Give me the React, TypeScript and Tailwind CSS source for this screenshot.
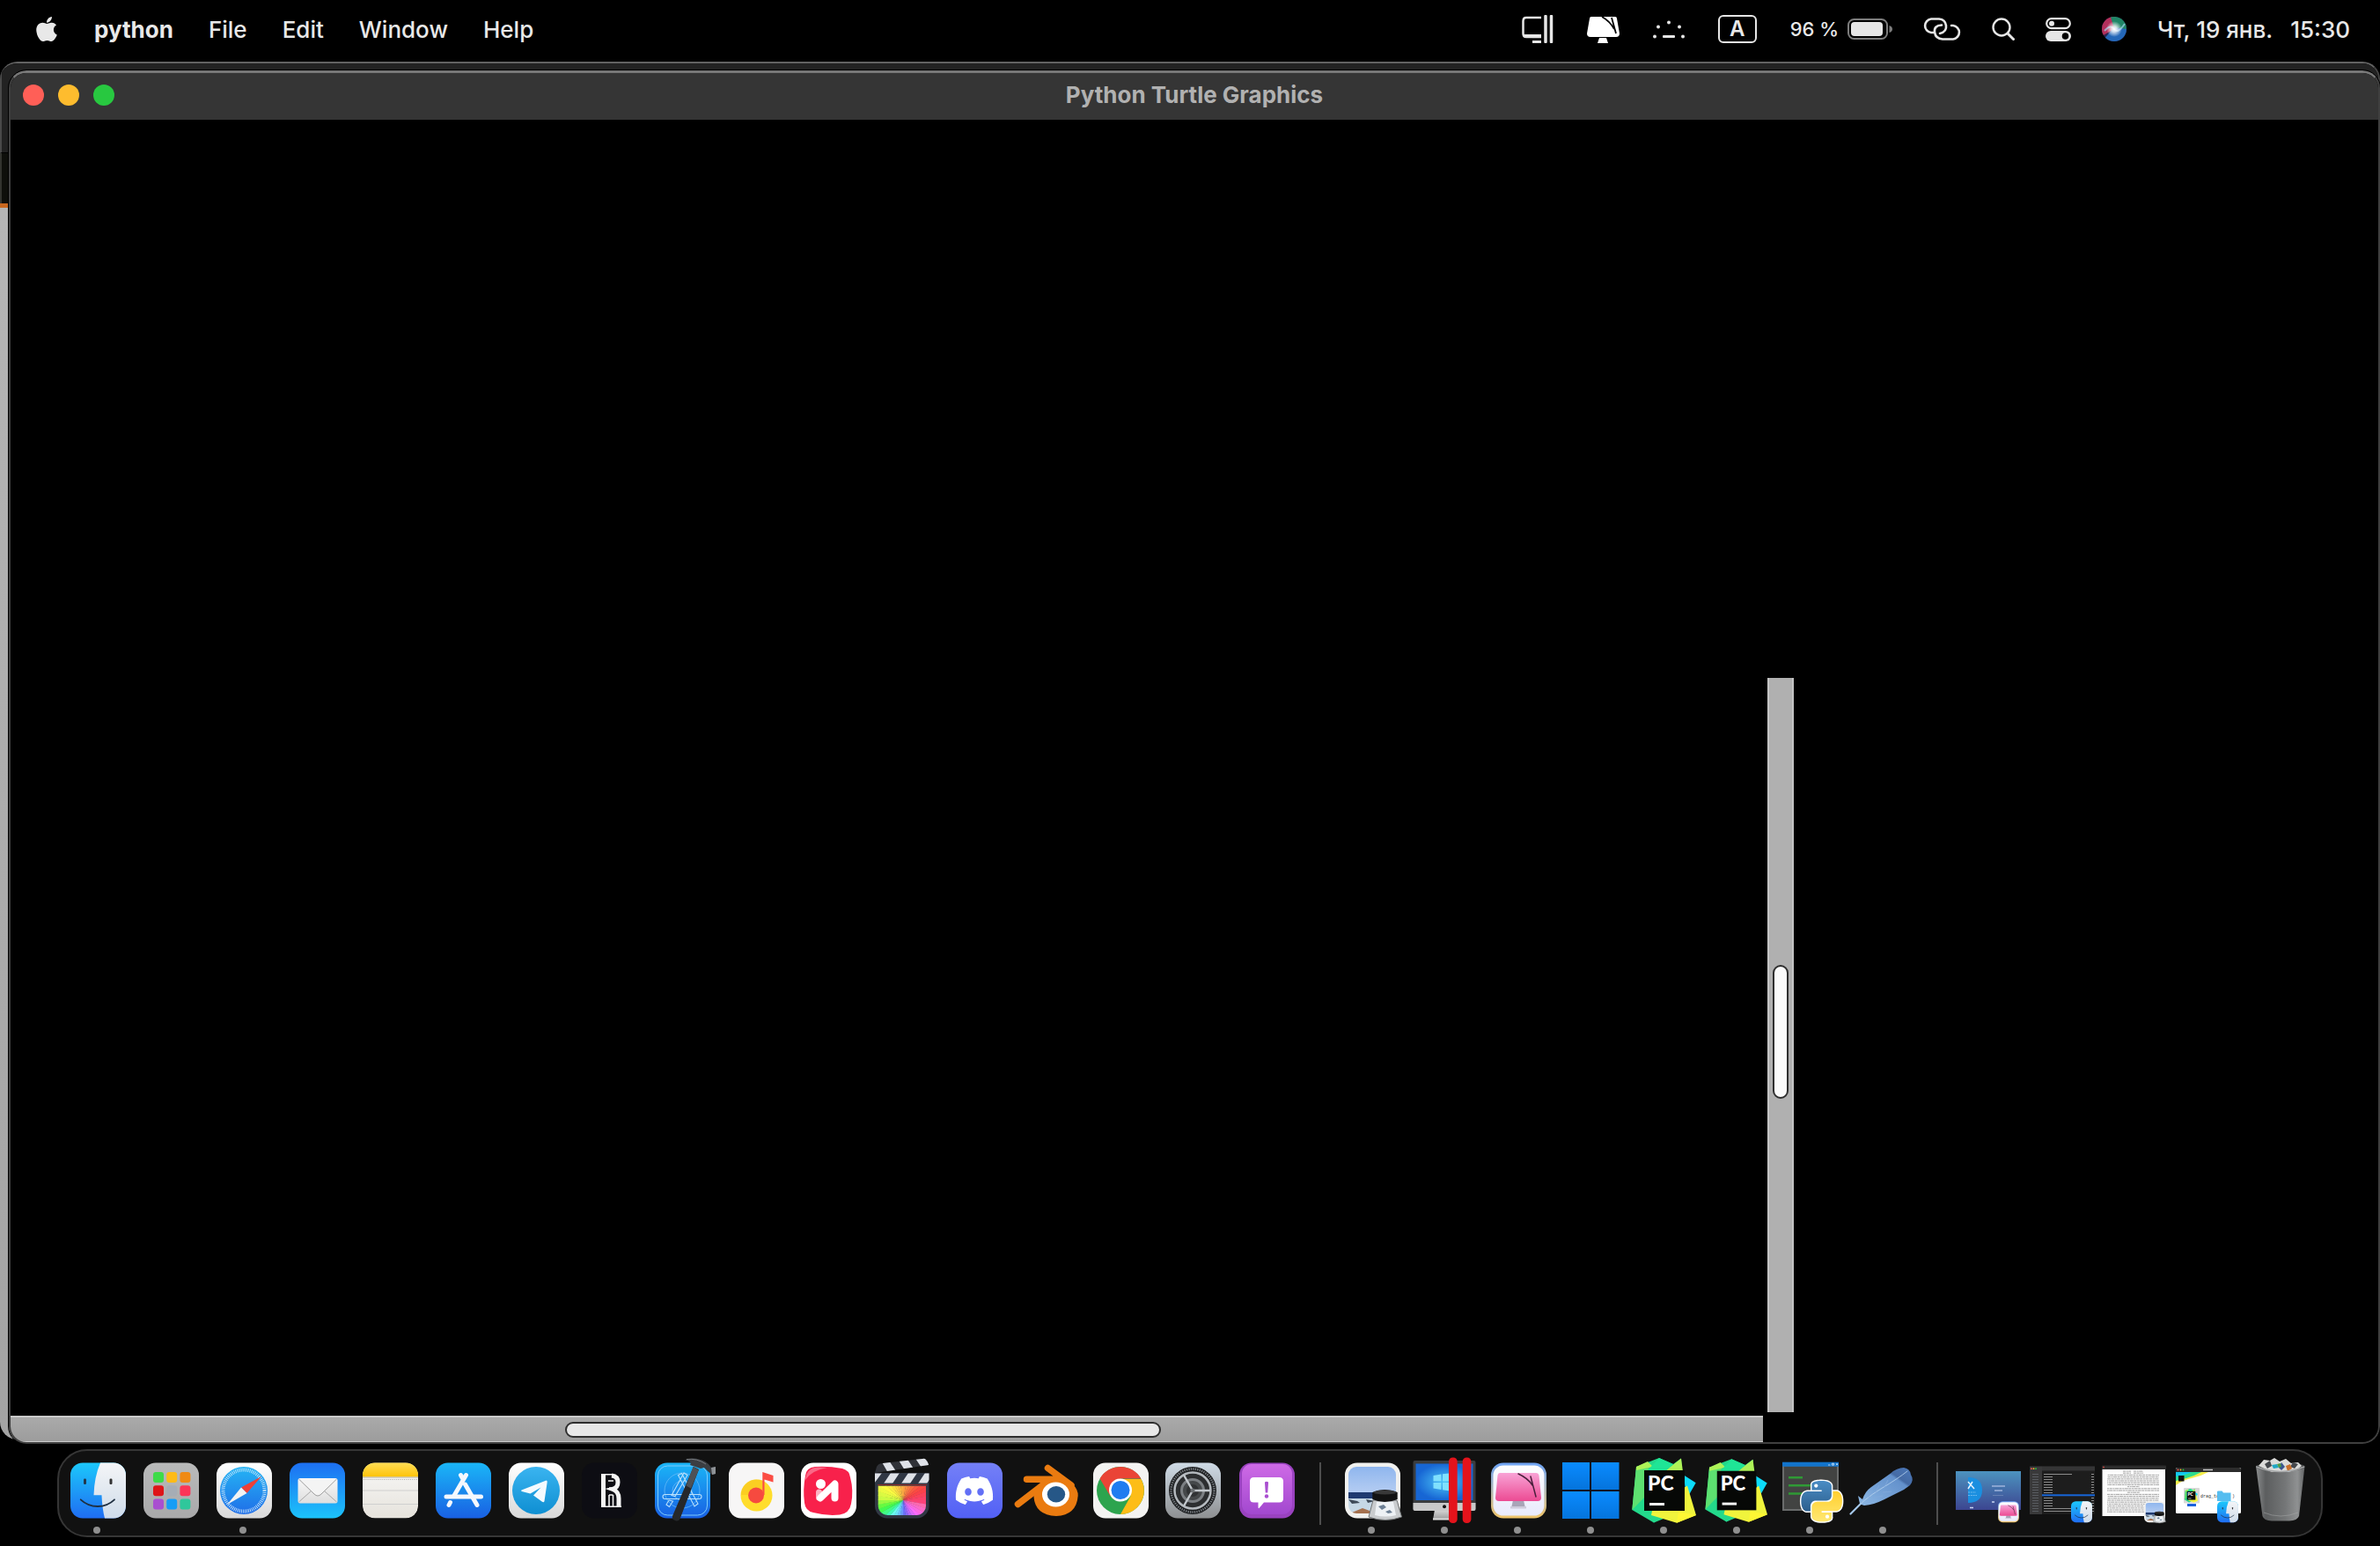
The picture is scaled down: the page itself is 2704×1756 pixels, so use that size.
import type { ReactNode } from 'react'
import { FaApple, FaDiscord } from 'react-icons/fa'

interface DockItem {
  name: string
  running?: boolean
  art: ReactNode
}

const MENUS = ['File', 'Edit', 'Window', 'Help']

const PYTHON_PATH =
  'M14.25.18l.9.2.73.26.59.3.45.32.34.34.25.34.16.33.1.3.04.26.02.2-.01.13V8.5l-.05.63-.13.55-.21.46-.26.38-.3.31-.33.25-.35.19-.35.14-.33.1-.3.07-.26.04-.21.02H8.77l-.69.05-.59.14-.5.22-.41.27-.33.32-.27.35-.2.36-.15.37-.1.35-.07.32-.04.27-.02.21v3.06H3.17l-.21-.03-.28-.07-.32-.12-.35-.18-.36-.26-.36-.36-.35-.46-.32-.59-.28-.73-.21-.88-.14-1.05-.05-1.23.06-1.22.16-1.04.24-.87.32-.71.36-.57.4-.44.42-.33.42-.24.4-.16.36-.1.32-.05.24-.01h.16l.06.01h8.16v-.83H6.18l-.01-2.75-.02-.37.05-.34.11-.31.17-.28.25-.26.31-.23.38-.2.44-.18.51-.15.58-.12.64-.1.71-.06.77-.04.84-.02 1.27.05z'

// id, top colour, bottom colour
const GRADIENTS: [string, string, string][] = [
  ['finderBlue', '#1cc8fb', '#1f6df2'],
  ['finderWhite', '#f4f5f7', '#cfdcea'],
  ['white', '#ffffff', '#d9d9d9'],
  ['safari', '#25b4f4', '#1f6ee8'],
  ['mail', '#1d6ff2', '#1cc3fb'],
  ['envelope', '#f8f8f8', '#dedede'],
  ['notesTop', '#ffde57', '#fec309'],
  ['notes', '#f8f8f7', '#e6e3dc'],
  ['store', '#1ab6f7', '#1960e3'],
  ['telegram', '#3ab4f0', '#0f8fd2'],
  ['discord', '#7480f7', '#5260f5'],
  ['settings', '#cfdbe6', '#8e9092'],
  ['feedback', '#ce6ae6', '#a248cf'],
  ['sky', '#8fb6ee', '#b5cdf2'],
  ['cmmRing', '#6fa5f7', '#f0c468'],
  ['cmm', '#fdfdff', '#e9eafc'],
  ['pink', '#f8a3d6', '#ec4b93'],
  ['win', '#0a8bff', '#0574dc'],
  ['metal', '#d6d6d6', '#9b9b9b'],
  ['yellow', '#ffe873', '#ffcf2e'],
  ['pyBlue', '#4a8cc4', '#2c5f8e'],
  ['launch', '#b9baba', '#a9a9aa'],
  ['wall', '#4c93bf', '#3c4590'],
]

// [angle clockwise from the top, hue]
const WHEEL: [number, number][] = [
  [0, 390],
  [45, 365],
  [90, 342],
  [135, 295],
  [180, 220],
  [210, 175],
  [240, 125],
  [270, 75],
  [310, 55],
  [360, 30],
]

function wheelHue(deg: number) {
  const i = Math.max(1, WHEEL.findIndex(([angle]) => angle >= deg))
  const [a0, h0] = WHEEL[i - 1]
  const [a1, h1] = WHEEL[i]
  return h0 + ((deg - a0) / (a1 - a0)) * (h1 - h0)
}

function Defs() {
  return (
    <svg className="absolute size-0" aria-hidden="true">
      <defs>
        {GRADIENTS.map(([id, from, to]) => (
          <linearGradient key={id} id={id} x1="0" y1="0" x2="0" y2="1">
            <stop offset="0" stopColor={from} />
            <stop offset="1" stopColor={to} />
          </linearGradient>
        ))}
        <linearGradient id="trash" x1="0" y1="0" x2="1" y2="0">
          <stop offset="0" stopColor="#8b8d8e" />
          <stop offset="0.2" stopColor="#5c5e5f" />
          <stop offset="0.6" stopColor="#747677" />
          <stop offset="0.85" stopColor="#8f9192" />
          <stop offset="1" stopColor="#636566" />
        </linearGradient>
        <linearGradient id="feather" x1="0" y1="1" x2="1" y2="0">
          <stop offset="0" stopColor="#8db8e4" />
          <stop offset="0.7" stopColor="#6391cc" />
          <stop offset="0.74" stopColor="#456ba5" />
          <stop offset="1" stopColor="#4c79ba" />
        </linearGradient>
        <radialGradient id="desk">
          <stop offset="0" stopColor="#4cc4f7" />
          <stop offset="1" stopColor="#1766d4" />
        </radialGradient>
        <radialGradient id="siriGlow">
          <stop offset="0" stopColor="#ffffff" />
          <stop offset="0.35" stopColor="#ffffff" stopOpacity="0.8" />
          <stop offset="1" stopColor="#ffffff" stopOpacity="0" />
        </radialGradient>
        <clipPath id="tile">
          <rect width="63" height="63" y="0.5" rx="14" />
        </clipPath>
        <clipPath id="fcpBody">
          <path d="M4.700 26.700H59V49a11 11 0 0 1-11 11H16A11 11 0 0 1 4.700 49Z" />
        </clipPath>
        <clipPath id="clapTop">
          <path d="M1 12 3 5Q5 1 10 1L55-4q4-1 6 3l1 4Z" />
        </clipPath>
        <clipPath id="clapBottom">
          <rect x="1" y="12.500" width="61.500" height="11" />
        </clipPath>
        <clipPath id="photo">
          <rect x="4" y="5" width="54" height="53" rx="9" />
        </clipPath>
        <clipPath id="siriDisc">
          <circle cx="14" cy="14" r="14" />
        </clipPath>
      </defs>
    </svg>
  )
}

function Tile({ fill }: { fill: string }) {
  return <rect y="0.5" width="63" height="63" rx="14" fill={fill} />
}

function Finder() {
  return (
    <g>
      <Tile fill="url(#finderBlue)" />
      <path
        d="M34 .5Q27 17 26.500 37.300H35.500Q36 52 39 63.500H49A14 14 0 0 0 63 49.500V14.500A14 14 0 0 0 49 .5Z"
        fill="url(#finderWhite)"
      />
      <rect x="15" y="18.500" width="3" height="6.500" rx="1.200" fill="#22384e" />
      <rect x="44.500" y="18.500" width="3" height="6.500" rx="1.200" fill="#333" />
      <path d="M11.700 42.300Q20 50 31 50T50 42.300" fill="none" stroke="#1f2f40" strokeWidth="1.800" strokeLinecap="round" />
    </g>
  )
}

function Launchpad() {
  const colors = ['#3ddb48', '#fdbb17', '#f08a14', '#de1518', '#a6adb5', '#fb3557', '#a94fd0', '#179df5', '#2fc79b']
  return (
    <g>
      <Tile fill="url(#launch)" />
      {colors.map((color, i) => (
        <rect key={color} x={11 + (i % 3) * 15.2} y={11 + Math.floor(i / 3) * 15.2} width="12" height="12" rx="3" fill={color} />
      ))}
    </g>
  )
}

function Safari() {
  return (
    <g>
      <Tile fill="url(#white)" />
      <circle cx="31" cy="32" r="27" fill="url(#safari)" />
      <circle cx="31" cy="32" r="23.500" fill="none" stroke="#d5ecfb" strokeWidth="4" strokeDasharray="0.8 1.250" />
      <path d="M51 16 28 28.500 34.500 35Z" fill="#ee4037" />
      <path d="M12 48 28 28.500 34.500 35Z" fill="#f3f3f3" />
    </g>
  )
}

function Mail() {
  return (
    <g>
      <Tile fill="url(#mail)" />
      <rect x="9.500" y="18" width="45" height="28.500" rx="2.500" fill="url(#envelope)" />
      <path d="M10.500 45 24 33M53.500 45 40 33" stroke="#a9a9a9" strokeWidth="1" />
      <path d="M10.500 19 28 36Q32 40 36 36L53.500 19" fill="#f4f4f4" stroke="#9e9e9e" strokeWidth="1" />
    </g>
  )
}

function Notes() {
  return (
    <g clipPath="url(#tile)">
      <Tile fill="url(#notes)" />
      <rect width="63" height="16.500" fill="url(#notesTop)" />
      <path d="M0 17H63" stroke="#b9b3a0" strokeWidth="1" />
      <path d="M1 19.500H63" stroke="#aaa" strokeWidth="1" strokeDasharray="1 1.300" />
      <path d="M0 32H63M0 47.500H63" stroke="#cfcfcf" strokeWidth="1" />
    </g>
  )
}

function AppStore() {
  return (
    <g>
      <Tile fill="url(#store)" />
      <g stroke="#f5f8fd" strokeWidth="5" strokeLinecap="round">
        <path d="M28.500 14.500 31 19M34.500 14.500 20.500 38.500M33.500 25 47 48.500M16.500 45.500 15 48.500" />
        <path d="M12 39H51.500" />
      </g>
    </g>
  )
}

function Telegram() {
  return (
    <g>
      <Tile fill="url(#white)" />
      <circle cx="31" cy="32" r="27" fill="url(#telegram)" />
      <path
        d="M14.500 31.500 42 20.700Q44 20.200 43.700 22.500L40.500 44Q40 46 38 44.800L28 37.500 36.500 28.500 24.500 35.500 14.800 33Q13.500 32.200 14.500 31.500Z"
        fill="#f4fafe"
      />
    </g>
  )
}

function Bank() {
  return (
    <g>
      <Tile fill="#0d0d13" />
      <g fill="none" stroke="#f4f4f4">
        <path d="M24.500 13V51" strokeWidth="5" />
        <path d="M22 13.700H36M22 50.300H45M30 21H36" strokeWidth="1.600" />
        <path d="M34 15Q41 16 41 22.500T35 30.500Q42 33 42 41V50" strokeWidth="5" />
        <path d="M31 29H38M31 50V37M35.500 50V37M31 37H35.500" strokeWidth="1.600" />
      </g>
    </g>
  )
}

function Xcode() {
  return (
    <g>
      <Tile fill="url(#store)" />
      <rect x="3.500" y="4" width="56" height="56" rx="11" fill="none" stroke="#7dcbfb" strokeWidth="1" />
      <g fill="none" stroke="#64b9f8" strokeWidth="0.800">
        <circle cx="31" cy="32" r="20" />
        <circle cx="31" cy="32" r="11" />
      </g>
      <g fill="none" stroke="#b9e0fc" strokeWidth="1.100">
        <rect x="9" y="36.500" width="44" height="5" rx="2.500" />
        <path d="m33 12 4 2.500-14 24-4-1ZM26.500 14.500l4-2L49 47l-4 3ZM13 48l3-5 4.500 1-4 6.500Z" />
      </g>
      <path d="m44 5 6 3-21 55q-2 5-6 3-4-1-3-5Z" fill="#26282b" />
      <path d="m43.500 5 6.500 3.500-9 21-5.500-3Z" fill="#4d5156" />
      <path d="M34-3Q46-7 57-1l4 3 3 4 5-1v8l-4 1-5-4-4-4-4 1-12-4Q43-1 34-3Z" fill="#3b3e42" />
      <path d="M36-3.500Q48-5 58 2" fill="none" stroke="#777b80" strokeWidth="1" />
      <path d="m64 6 5-1v8l-4 1Z" fill="#8e9296" />
    </g>
  )
}

function Music() {
  return (
    <g transform="translate(1 0)">
      <Tile fill="#f7f6f6" />
      <circle cx="31.500" cy="37.500" r="18" fill="#ffdd2c" />
      <path d="M14 35A18 18 0 0 1 38 20.500V37H14Z" fill="#f9c41d" opacity="0.600" />
      <circle cx="31" cy="37.500" r="9" fill="#f64a3f" />
      <path d="M38.300 11 50.500 15V22.500L40.500 19.500V37H38.300Z" fill="#fb4d44" />
    </g>
  )
}

function YandexStart() {
  return (
    <g>
      <Tile fill="#fff" />
      <path
        d="M16 5Q31 4 47 7 55 9 56 17 60 32 57 47 55 58 44 59.500 29 61 14 57 5 55 4 46 2 31 5 15 6 6 16 5Z"
        fill="#f8214b"
      />
      <path d="M5 20Q6 6 20 5.500L30 6Q12 9 5 20Z" fill="#fb88a0" opacity="0.700" />
      <path d="M20.500 34V40" stroke="#fcb2c2" strokeWidth="7" strokeLinecap="round" />
      <path d="M22 40.500 38.500 24.500V40.500" fill="none" stroke="#fff" strokeWidth="8" strokeLinecap="round" strokeLinejoin="round" />
      <circle cx="22.500" cy="24.500" r="5.500" fill="#fff" />
    </g>
  )
}

function FinalCut() {
  const wedges = Array.from({ length: 36 }, (_, i) => i * 10)
  const point = (deg: number) => {
    const rad = (deg * Math.PI) / 180
    return `${(33 + 50 * Math.sin(rad)).toFixed(2)} ${(43 - 50 * Math.cos(rad)).toFixed(2)}`
  }
  return (
    <g>
      <path d="M1 12H62.500V50a14 14 0 0 1-14 13.500H15A14 14 0 0 1 1 50Z" fill="#303744" />
      <path d="M1 12 3 5Q5 1 10 1L55-4q4-1 6 3l1 4Z" fill="#303238" />
      <g clipPath="url(#clapTop)" fill="#dfe2e8">
        <path d="m8-2 9 0 8 12-9 2ZM27-4l10-1 8 12-10 2ZM46-6l10-1 8 11-10 2Z" />
      </g>
      <g clipPath="url(#clapBottom)" fill="#dfe2e8">
        <path d="M1 12H9L0 24H-9ZM19 12h10l-8 12H11ZM39 12h10l-8 12H31ZM58 12h10l-8 12H50Z" />
      </g>
      <path d="M4 25.500H60" stroke="#8a2a2a" strokeWidth="1" />
      <g clipPath="url(#fcpBody)">
        {wedges.map((deg) => (
          <path
            key={deg}
            d={`M33 43L${point(deg)}L${point(deg + 11)}Z`}
            fill={`hsl(${wheelHue(deg) % 360} 95% ${deg > 90 && deg < 220 ? 70 : 62}%)`}
          />
        ))}
      </g>
    </g>
  )
}

function Discord() {
  return (
    <g>
      <Tile fill="url(#discord)" />
      <FaDiscord x={8} y={9} size={46} color="#fff" />
    </g>
  )
}

function Blender() {
  return (
    <g>
      <g fill="none" stroke="#ea7b10" strokeWidth="7.500" strokeLinecap="round" strokeLinejoin="round">
        <path d="M31.500 6.500 58 26M7.500 19.300H44M-2.500 47.500 34 19.500" />
      </g>
      <path d="M26 19H49L60 25Q66 31 65.700 38 64 60 41 61 17 60 15.500 39L16 33Z" fill="#ea7b10" />
      <ellipse cx="40.500" cy="36.500" rx="15.500" ry="14" fill="#fff" />
      <ellipse cx="41" cy="36.200" rx="10.200" ry="9.200" fill="#265787" />
    </g>
  )
}

function Chrome() {
  return (
    <g>
      <Tile fill="#f3f3f2" />
      <circle cx="31" cy="32" r="27" fill="#2da44e" />
      <path d="M31 19H54.500A27 27 0 0 1 31 59L42.500 38.500Z" fill="#fdbd17" />
      <path d="M7.600 18.500A27 27 0 0 1 54.400 18.500H31L19.500 38.500Z" fill="#ea4436" />
      <circle cx="31" cy="31.500" r="13" fill="#fff" />
      <circle cx="31" cy="31.500" r="10.500" fill="#1f7cf0" />
    </g>
  )
}

function Settings() {
  return (
    <g transform="translate(-1 0)">
      <Tile fill="url(#settings)" />
      <circle cx="31" cy="32" r="27" fill="#1c1e20" />
      <circle cx="31" cy="32" r="24.500" fill="none" stroke="#7a7f84" strokeWidth="2.500" strokeDasharray="1.300 1.200" />
      <circle cx="31" cy="32" r="20.500" fill="#2c2e30" stroke="#b4b9be" strokeWidth="2.500" />
      <circle cx="31" cy="32" r="12.500" fill="#45484a" stroke="#7b7f83" strokeWidth="3" />
      <circle cx="31" cy="32" r="7" fill="#303234" />
      <path d="M31 32H51M31 32 21 14.500M31 32 21 49.500" stroke="#c1c6cb" strokeWidth="2.500" />
      <circle cx="31" cy="32" r="2.500" fill="#6d7174" />
    </g>
  )
}

function Feedback() {
  return (
    <g>
      <Tile fill="#9a42c0" />
      <rect x="3" y="2" width="57" height="57" rx="11" fill="url(#feedback)" />
      <path d="M16.500 17H45.500Q50 17 50 21.500V41Q50 45.500 45.500 45.500H28L22.500 52Q21.500 52.500 21.500 51V45.500H16.500Q12 45.500 12 41V21.500Q12 17 16.500 17Z" fill="#fff" />
      <path d="M29 22.500Q31 21 33 22.500L32.300 34.500H29.700Z" fill="#a94fd0" />
      <circle cx="31" cy="38.500" r="2.200" fill="#a94fd0" />
    </g>
  )
}

function Preview() {
  return (
    <g>
      <Tile fill="#f1f1ef" />
      <g clipPath="url(#photo)">
        <rect x="4" y="5" width="54" height="30" fill="url(#sky)" />
        <rect x="4" y="34" width="54" height="8" fill="#1f3a70" />
        <rect x="4" y="41" width="54" height="18" fill="#c6d8e6" />
        <path d="M4 42 14 44 17 46 8 47ZM24 42l10 2-8 2Z" fill="#3e4a58" />
        <path d="M8 57 20 52 28 55V59H8Z" fill="#a5714f" />
      </g>
      <path d="M32 43H59L64.500 62Q46 69 27 62Z" fill="#c9ccce" stroke="#707374" strokeWidth="1" />
      <path d="M36 45H55L58 60Q46 63 34 60Z" fill="#edf1f4" />
      <path d="m38 50 6-2 3 3-5 3ZM46 56l5-2 3 3-5 1Z" fill="#6c7f94" />
      <path d="M31.300 34Q45 28 59.700 34V42Q45 48 31.300 42Z" fill="#121212" />
      <ellipse cx="45.500" cy="34" rx="13" ry="2.500" fill="#383838" />
    </g>
  )
}

function Parallels() {
  return (
    <g>
      <path d="M19 54H41L42 65H17Z" fill="url(#metal)" />
      <path d="M17 64.500H43" stroke="#dcdcdc" strokeWidth="2" />
      <rect x="-5.500" y="-2" width="71" height="57" rx="2" fill="#3a3d40" />
      <rect x="-2.500" y="1.500" width="65" height="41.500" fill="url(#desk)" />
      <path d="M-5.500 46H65.500V53Q65.500 55 63.500 55H-3.500Q-5.500 55-5.500 53Z" fill="#c9c9c9" />
      <circle cx="30" cy="50.200" r="2" fill="#111" />
      <g fill="#7fe0fd">
        <path d="M17.500 15 26.500 13.500V21.500H17.500ZM28 13.300 40 12V21.500H28ZM17.500 23H26.500V31L17.500 29.500ZM28 23H40V33L28 31.300Z" />
      </g>
      <rect x="35" y="-5.500" width="9.700" height="74.500" rx="4.500" fill="#e4131b" />
      <rect x="50.700" y="-5.500" width="9.700" height="74.500" rx="4.500" fill="#e4131b" />
    </g>
  )
}

function CleanMyMac() {
  return (
    <g>
      <Tile fill="url(#cmmRing)" />
      <rect x="2.500" y="3.500" width="58" height="57" rx="11.500" fill="url(#cmm)" />
      <path d="M25 43H37L39 52H23Z" fill="#a9a4b8" />
      <path d="M22 50H40V52.500H22Z" fill="#cfcbdc" />
      <path d="M10 12H51Q54 12 54.500 15L57 40Q57 44 53 44H9Q5 44 5 40L7.500 15Q8 12 10 12Z" fill="url(#pink)" />
      <path d="M31 13Q42 18 47 26M45 16 51 39" fill="none" stroke="#4a1f3c" strokeWidth="1.500" strokeLinecap="round" />
    </g>
  )
}

function Windows() {
  return (
    <g fill="url(#win)">
      <rect x="-2" y="0" width="31" height="31" />
      <rect x="31" y="0" width="31.500" height="31" />
      <rect x="-2" y="33" width="31" height="31" />
      <rect x="31" y="33" width="31.500" height="31" />
    </g>
  )
}

function PyCharm() {
  return (
    <g>
      <path d="M53 14.500 66.700 23.300 56 42Z" fill="#0ddcfb" />
      <path d="M12 60 19 68.500 30 60Z" fill="#19b5c9" />
      <path d="M-1 5 25-5 41 2 50-4.500 52 26 30 64 19 68.500-5.700 54Z" fill="#23d98b" />
      <path d="M-1 5 14 2 8 40-5.700 54Z" fill="#5de070" />
      <path d="M-1 5 12-1 18 5-1 9ZM33 9 50-4.500 53 18 40 20Z" fill="#aef357" />
      <path d="M25-5 41 2 33 9 12 9Z" fill="#1fe596" />
      <path d="M57 26.500 67 60 45 68.700 16 60 18 50Z" fill="#f0f43c" />
      <path d="M47 56 67 60 45 68.700Z" fill="#fdf734" />
      <rect x="8" y="9" width="46" height="46" fill="#060806" />
      <text x="12" y="31.500" fill="#fff" fontFamily="Lato, sans-serif" fontWeight="900" fontSize="23">PC</text>
      <rect x="14" y="46" width="17" height="3" fill="#fff" />
    </g>
  )
}

function PythonLauncher() {
  return (
    <g>
      <rect x="-1" y="0" width="64" height="55" fill="#6a6c6c" />
      <rect x="1" y="4.500" width="60" height="48.500" fill="#424342" />
      <rect x="-1" y="-0.300" width="64" height="5" fill="#1274cc" />
      <path d="M51 3H53.500M55.500 1.200H57.500V3.200H55.500ZM60 1.200 62 3.200M62 1.200 60 3.200" fill="none" stroke="#fff" strokeWidth="0.700" />
      <path d="M6 17.300H22M6 26.300H31M6 35.500H22" stroke="#2f9a35" strokeWidth="2.500" />
      <g transform="translate(20.500 21) scale(1.93)">
        <g stroke="#fff" strokeWidth="1.500" strokeLinejoin="round" fill="#fff">
          <path d={PYTHON_PATH} />
          <path d={PYTHON_PATH} transform="rotate(180 12 12)" />
        </g>
        <path d={PYTHON_PATH} fill="url(#pyBlue)" />
        <path d={PYTHON_PATH} fill="url(#yellow)" transform="rotate(180 12 12)" />
        <circle cx="8.700" cy="2.900" r="1.100" fill="#fff" />
        <circle cx="15.300" cy="21.100" r="1.100" fill="#fff" />
      </g>
    </g>
  )
}

function Feather() {
  return (
    <g>
      <path d="M4 47 2 38 7 42Q10 33 17 28L39 12.500Q46 6 54 6 61 7 62 14 66 20 61 26L54 31 31 42.500Q20 48 9 49L6 48Z" fill="url(#feather)" />
      <path d="M-6.500 58.500Q8 42 28 30T58 10" fill="none" stroke="#b9d4ef" strokeWidth="0.800" strokeLinecap="round" />
      <path d="M-6.500 58.500 5 47" stroke="#a6c8ea" strokeWidth="2.200" strokeLinecap="round" />
      <path d="M14 40 17 32M22 34 26 26M32 28 36 20M20 40 30 38M30 34 40 33" stroke="#83aadb" strokeWidth="0.800" />
    </g>
  )
}

function Badge({ children }: { children: ReactNode }) {
  return <g transform="translate(41 44) scale(0.38)">{children}</g>
}

function CleanerWindow() {
  return (
    <g>
      <rect x="-7" y="10" width="74" height="44" fill="url(#wall)" />
      <path d="M7 17Q23 17 23 31.500T7 46Z" fill="#1a8fe0" />
      <path d="m7 22 7 8M12 22l-5 8" stroke="#e6f3ff" strokeWidth="1.500" />
      <path d="M7 34H16M7 37.500H17" stroke="#6fb9ee" strokeWidth="1.200" strokeDasharray="2 0.800" />
      <path d="M34 27H49M37 32H46" stroke="#9fb4dc" strokeWidth="1.500" />
      <path d="M35 37.500H47" stroke="#6f86b8" strokeWidth="0.800" />
      <path d="M34 45H37M9 51.500H13" stroke="#c9d5f2" strokeWidth="1.500" />
      <Badge><CleanMyMac /></Badge>
    </g>
  )
}

function FilesWindow() {
  const rows = Array.from({ length: 15 }, (_, i) => 13.5 + i * 3)
  return (
    <g>
      <rect x="-6" y="4.500" width="74" height="54.500" rx="1.500" fill="#1d1d1d" />
      <rect x="-6" y="4.500" width="14" height="54.500" fill="#39393a" />
      <rect x="8" y="4.500" width="60" height="5" fill="#353536" />
      <circle cx="-4" cy="7.200" r="0.900" fill="#fb5a52" />
      <circle cx="-1.500" cy="7.200" r="0.900" fill="#f9bb2d" />
      <circle cx="1" cy="7.200" r="0.900" fill="#2bc840" />
      {rows.map((y, i) => (
        <path key={y} d={`M10 ${y}H${i === 0 || i > 12 ? 42 : 20}M64 ${y}H67`} stroke="#8c8c8c" strokeWidth="1" />
      ))}
      {rows.map((y) => (
        <path key={y} d={`M-3 ${y}H4`} stroke="#62666b" strokeWidth="0.800" />
      ))}
      <rect x="8" y="36.300" width="60" height="2" fill="#1765d8" />
      <Badge><Finder /></Badge>
    </g>
  )
}

function DocumentWindow() {
  const rows = Array.from({ length: 22 }, (_, i) => 10 + i * 2.2)
  return (
    <g>
      <rect x="-7" y="3.500" width="73" height="5" rx="1" fill="#2b2b2b" />
      <circle cx="-5" cy="5.500" r="0.900" fill="#c7463f" />
      <rect x="-6.500" y="8" width="71.500" height="53" fill="#fcfcfc" />
      {rows.map((y, i) => (
        <path
          key={y}
          d={i === 8 || i === 11 ? `M22 ${y}H36` : i < 2 ? `M17 ${y}H26M29 ${y}H40` : `M-1 ${y}H58`}
          stroke="#8a8a8a"
          strokeWidth="0.800"
          strokeDasharray="3 0.700 2 0.500 4 0.600"
          strokeDashoffset={(i * 7) % 11}
        />
      ))}
      <Badge><Preview /></Badge>
    </g>
  )
}

function InstallerWindow() {
  return (
    <g>
      <rect x="-6" y="6" width="74" height="52" rx="1.500" fill="#fff" />
      <path d="M-6 11H31Q22 16 12 18T-6 26Z" fill="#f4ec4a" />
      <path d="M-6 11H23Q14 16 6 18L-6 21Z" fill="#2ddc8e" />
      <path d="M-6 11H12Q4 15-6 16Z" fill="#12c8ee" />
      <path d="M-6 11V8Q-6 6-4 6H66Q68 6 68 8V11Z" fill="#2c2c2c" />
      <circle cx="-3.500" cy="8.500" r="0.900" fill="#fb5a52" />
      <circle cx="-0.500" cy="8.500" r="0.900" fill="#f9bb2d" />
      <circle cx="2.500" cy="8.500" r="0.900" fill="#2bc840" />
      <path d="M25 8.500H36" stroke="#c9c9c9" strokeWidth="1.500" />
      <rect x="-3" y="15" width="6.500" height="6.500" fill="#111" />
      <rect x="3" y="29" width="18" height="17.500" rx="1" fill="#d9d9d9" />
      <g transform="translate(5 31) scale(0.21)"><PyCharm /></g>
      <rect x="7" y="47" width="10" height="3" fill="#1c62dc" />
      <text x="22" y="40" fill="#333" fontFamily="Liberation Mono, monospace" fontSize="5">drag_to(</text>
      <text x="58" y="40" fill="#333" fontFamily="Liberation Mono, monospace" fontSize="5">)</text>
      <path d="M41 33V44H56.500V34.500H48L46.500 32.500H42Z" fill="#55bdf0" />
      <Badge><Finder /></Badge>
    </g>
  )
}

function Trash() {
  return (
    <g>
      <path d="M2 4Q30-2 57.500 4L51 61Q49 66 40 66.500H20Q11 66 9.500 61Z" fill="url(#trash)" />
      <ellipse cx="30" cy="5" rx="27.500" ry="5" fill="#4a4b4c" />
      <path d="m5 4 6-7 7 1 5-3 6 4 7-3 6 5 8-1 4 4-5 4-10 3H20Z" fill="#dcdcda" />
      <path d="m12 2 6-4 2 6-5 3ZM44 0l6 2-4 5-5-2Z" fill="#45484c" />
      <path d="m20 3 6-1 2 4-6 1Z" fill="#21a7c4" />
      <path d="m31 0 4 5-4 4-3-3Z" fill="#3a5690" />
      <path d="m36 4 5-2 2 5-5 3Z" fill="#c96f2b" />
      <path d="m26 2 4-1 1 4-3 1Z" fill="#4f9d45" />
      <path d="M2.500 5Q30 16 57 5" fill="none" stroke="#a5a7a8" strokeWidth="1.500" />
      <path d="M11 57Q30 65 50 57" fill="none" stroke="#a9abac" strokeWidth="1" opacity="0.500" />
    </g>
  )
}

const APPS: DockItem[] = [
  { name: 'Finder', running: true, art: <Finder /> },
  { name: 'Launchpad', art: <Launchpad /> },
  { name: 'Safari', running: true, art: <Safari /> },
  { name: 'Mail', art: <Mail /> },
  { name: 'Notes', art: <Notes /> },
  { name: 'App Store', art: <AppStore /> },
  { name: 'Telegram', art: <Telegram /> },
  { name: 'Bank', art: <Bank /> },
  { name: 'Xcode', art: <Xcode /> },
  { name: 'Music', art: <Music /> },
  { name: 'Start', art: <YandexStart /> },
  { name: 'Final Cut Pro', art: <FinalCut /> },
  { name: 'Discord', art: <Discord /> },
  { name: 'Blender', art: <Blender /> },
  { name: 'Chrome', art: <Chrome /> },
  { name: 'System Settings', art: <Settings /> },
  { name: 'Feedback Assistant', art: <Feedback /> },
]

const OPEN_APPS: DockItem[] = [
  { name: 'Preview', running: true, art: <Preview /> },
  { name: 'Parallels Desktop', running: true, art: <Parallels /> },
  { name: 'CleanMyMac', running: true, art: <CleanMyMac /> },
  { name: 'Windows', running: true, art: <Windows /> },
  { name: 'PyCharm', running: true, art: <PyCharm /> },
  { name: 'PyCharm CE', running: true, art: <g transform="translate(0 1) scale(0.97)"><PyCharm /></g> },
  { name: 'Python', running: true, art: <PythonLauncher /> },
  { name: 'Turtle', running: true, art: <Feather /> },
]

const MINIMIZED: DockItem[] = [
  { name: 'CleanMyMac window', art: <CleanerWindow /> },
  { name: 'Finder window', art: <FilesWindow /> },
  { name: 'Document window', art: <DocumentWindow /> },
  { name: 'Installer window', art: <InstallerWindow /> },
  { name: 'Trash', art: <Trash /> },
]

function DockGroup({ items }: { items: DockItem[] }) {
  return (
    <div className="flex gap-[19px]">
      {items.map((item) => (
        <button key={item.name} type="button" aria-label={item.name} className="flex flex-col items-start gap-[9px]">
          <svg viewBox="0 0 64 64" className="size-16 overflow-visible" aria-hidden="true">
            {item.art}
          </svg>
          {item.running && <span className="ml-[26px] size-2 rounded-full bg-[#8f8f8f]" />}
        </button>
      ))}
    </div>
  )
}

function DockDivider() {
  return (
    <div className="flex w-[18px] justify-center pb-3">
      <div className="w-[2px] bg-[#4d4d4d]" />
    </div>
  )
}

function Dock() {
  return (
    <nav aria-label="Dock" className="mx-auto mt-1.5 mb-2.5 flex h-[100px] gap-[19px] rounded-[34px] border-2 border-[#363636] bg-[#111] pt-[13px] pr-3 pl-[13px]">
      <DockGroup items={APPS} />
      <DockDivider />
      <DockGroup items={OPEN_APPS} />
      <DockDivider />
      <DockGroup items={MINIMIZED} />
    </nav>
  )
}

function StatusIcons() {
  return (
    <>
      <button type="button" aria-label="Parallels">
        <svg width="36" height="32" fill="none" stroke="#e6e6e6" strokeWidth="2.500">
          <path d="M22 3H5Q1.500 3 1.500 7V21Q1.500 25 5 25H22" />
          <path d="M2 22H22V26H5Q2 25 2 22Z" fill="#e6e6e6" stroke="none" />
          <path d="M12 30.500H22" strokeWidth="3" />
          <path d="M27 1.500V30.500M33.500 1.500V30.500" strokeWidth="3.500" strokeLinecap="round" />
        </svg>
      </button>
      <button type="button" aria-label="CleanMyMac">
        <svg width="37" height="31">
          <path d="M5 1H32Q34 1 34 3L37 20Q37 24 33 24H4Q0 24 0 20L3 3Q3 1 5 1Z" fill="#fff" />
          <path d="M14 25H22L24 31H12Z" fill="#fff" />
          <path d="M17 1Q26 6 31 15M28 2 33 20" fill="none" stroke="#000" strokeWidth="1.800" />
        </svg>
      </button>
      <button type="button" aria-label="Face">
        <svg width="36" height="21" fill="#e6e6e6">
          <circle cx="18" cy="2.500" r="2" />
          <circle cx="6" cy="7.500" r="2" />
          <circle cx="30" cy="7.500" r="2" />
          <circle cx="2" cy="18.500" r="2" />
          <circle cx="34" cy="18.500" r="2" />
          <rect x="11" y="17" width="14" height="3" rx="1" />
        </svg>
      </button>
      <button type="button" className="flex h-8 w-11 items-center justify-center rounded-md border-2 border-[#e6e6e6] text-[24px] leading-none font-semibold">
        A
      </button>
    </>
  )
}

function SystemIcons() {
  return (
    <>
      <button type="button" className="flex items-center gap-2.5 text-[22px] font-medium">
        96 %
        <svg width="51" height="24" aria-hidden="true">
          <rect x="1" y="1" width="44" height="22" rx="6.500" fill="none" stroke="#7d7d7d" strokeWidth="2" />
          <rect x="4" y="4" width="36" height="16" rx="4" fill="#e6e6e6" />
          <path d="M47.500 8Q51 9 51 12T47.500 16Z" fill="#7d7d7d" />
        </svg>
      </button>
      <button type="button" aria-label="Hotspot">
        <svg width="43" height="26" fill="none" stroke="#e6e6e6" strokeWidth="2.600" strokeLinecap="round">
          <path d="M12 17H9A7.800 7.800 0 0 1 9 1.500H18Q25 2 26 9T19 18" />
          <path d="M32 9H34A7.800 7.800 0 0 1 34 24.500H22Q14 24 13 16.500T21 8.500" />
        </svg>
      </button>
      <button type="button" aria-label="Search">
        <svg width="26" height="26" fill="none" stroke="#e6e6e6" strokeLinecap="round">
          <circle cx="11" cy="11" r="9.500" strokeWidth="2.400" />
          <path d="M18 18 24.500 24.500" strokeWidth="3" />
        </svg>
      </button>
      <button type="button" aria-label="Control Center">
        <svg width="29" height="27">
          <rect x="1.200" y="1.200" width="26.600" height="11" rx="5.500" fill="none" stroke="#e6e6e6" strokeWidth="2.200" />
          <circle cx="7" cy="6.700" r="3" fill="#e6e6e6" />
          <rect y="15" width="29" height="12" rx="6" fill="#e6e6e6" />
          <circle cx="22.500" cy="21" r="3.800" fill="#000" />
        </svg>
      </button>
      <button type="button" aria-label="Siri">
        <svg width="28" height="28">
          <g clipPath="url(#siriDisc)">
            <rect width="28" height="28" fill="#2b2450" />
            <path d="M0 0H16L14 14 0 22Z" fill="#b3305c" />
            <path d="M10 0H28V14L14 14Z" fill="#1f8566" />
            <path d="M0 28 14 12 28 14V28Z" fill="#2467b8" />
            <path d="M3 16Q10 8 14 14T26 8" fill="none" stroke="#9fd6ee" strokeWidth="2" opacity="0.700" />
            <circle cx="14" cy="14" r="9" fill="url(#siriGlow)" />
          </g>
        </svg>
      </button>
    </>
  )
}

function MenuBar() {
  return (
    <header className="flex h-[66px] items-center pr-[34px] pl-[39px] text-[26px] font-medium text-[#e8e8e8]">
      <button type="button" aria-label="Apple menu" className="mr-10">
        <FaApple className="h-8 w-7" aria-hidden="true" />
      </button>
      <nav aria-label="Menu bar" className="flex gap-10">
        <button type="button" className="font-bold">python</button>
        {MENUS.map((menu) => (
          <button key={menu} type="button">{menu}</button>
        ))}
      </nav>
      <div className="ml-auto flex items-center gap-[38px]">
        <StatusIcons />
        <div className="flex items-center gap-[35px]">
          <SystemIcons />
          <time className="flex gap-5 whitespace-nowrap">
            <span>Чт, 19 янв.</span>
            <span>15:30</span>
          </time>
        </div>
      </div>
    </header>
  )
}

// The editor window left peeking out behind the turtle canvas
function BackWindow() {
  return (
    <div className="absolute inset-x-0 top-0 bottom-[5px] flex flex-col overflow-hidden rounded-[20px] border-t-2 border-r-2 border-t-[#626262] border-r-[#444] bg-black">
      <div className="h-[102px] border-b border-l-2 border-b-black border-l-[#4a4a4a] bg-[#222]" />
      <div className="h-[57px] border-l-2 border-[#33342f] bg-[#0e0f0b]" />
      <div className="h-[5px] w-5 bg-[#c8671f]" />
      <div className="w-5 flex-1 bg-linear-to-b from-[#b5b5b5] to-[#a3a3a3]" />
    </div>
  )
}

function TurtleWindow() {
  return (
    <main className="relative mt-[10px] ml-[10px] flex flex-1 flex-col overflow-hidden rounded-[20px] border-2 border-t-[3px] border-[#3f3f3f] border-t-[#777] bg-black outline-1 outline-black">
      <div className="grid h-[53px] grid-cols-[1fr_auto_1fr] items-center bg-[#353535] pb-1">
        <div className="flex gap-4 pl-[14px]">
          <button type="button" aria-label="Close" className="size-6 rounded-full bg-[#ff5f57]" />
          <button type="button" aria-label="Minimize" className="size-6 rounded-full bg-[#febc2e]" />
          <button type="button" aria-label="Zoom" className="size-6 rounded-full bg-[#28c840]" />
        </div>
        <h1 className="text-[26px] leading-none font-bold text-[#b1b1b1]">Python Turtle Graphics</h1>
      </div>
      <div className="flex flex-1 items-end">
        <div className="flex h-[30px] w-[74%] items-center border-t-2 border-b border-t-[#c9c9c9] border-b-[#c9c9c9] bg-linear-to-b from-[#aaa] to-[#9c9c9c] pl-[630px]">
          <div className="h-[18px] w-[677px] rounded-full border-2 border-[#2e2e2e] bg-[#e8e8e8]" />
        </div>
        <div className="mb-[34px] ml-[5px] flex h-[834px] w-[30px] flex-col items-center border-x-2 border-[#c4c4c4] bg-[#b0b0b0] pt-[326px]">
          <div className="h-[152px] w-[18px] rounded-full border-2 border-[#2e2e2e] bg-[#fbfbfb]" />
        </div>
      </div>
    </main>
  )
}

export default function App() {
  return (
    <div className="flex min-h-screen flex-col bg-black font-['Inter',sans-serif]">
      <Defs />
      <MenuBar />
      <div className="relative mt-1 flex flex-1">
        <BackWindow />
        <TurtleWindow />
      </div>
      <Dock />
    </div>
  )
}
